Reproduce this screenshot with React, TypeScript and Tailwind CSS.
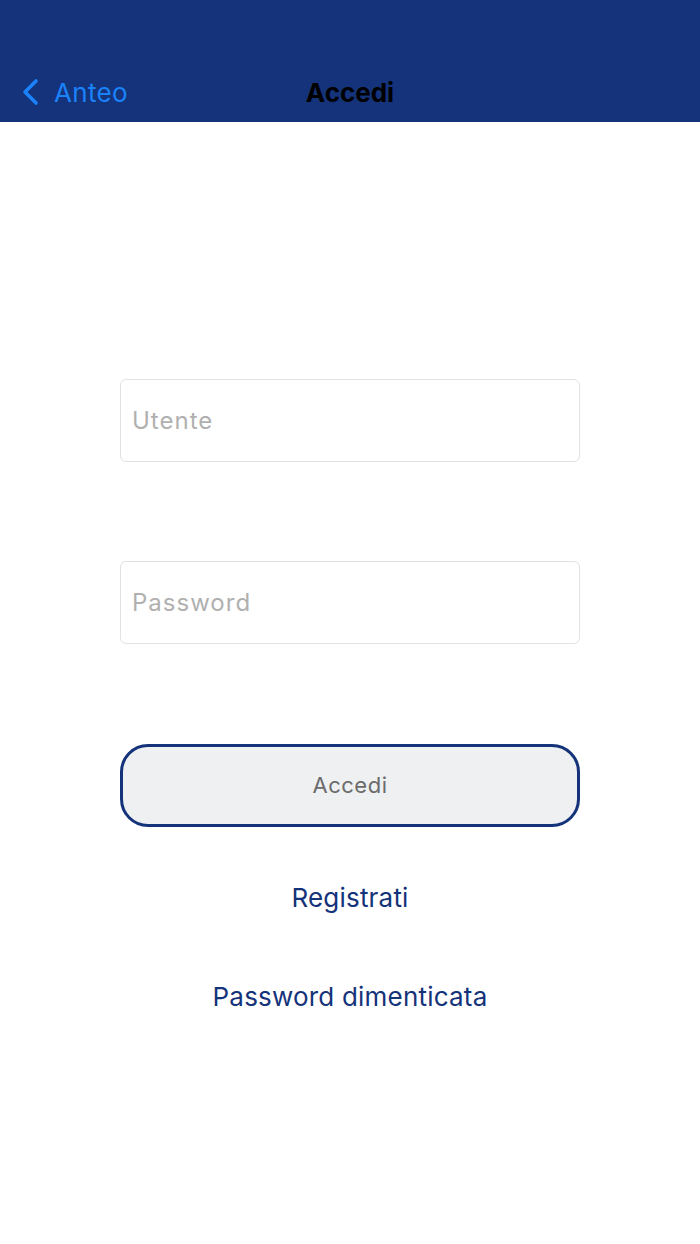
export default function App() {
  return (
    <div className="flex min-h-[1244px] w-[700px] flex-col bg-white font-['Inter',sans-serif]">
      <header className="flex h-[122px] flex-col justify-end bg-[#15337a] pb-[10px]">
        <div className="relative flex h-[40px] items-center px-[20px]">
          <div className="flex items-center gap-[12px] text-[#1a82fb]">
            <svg width="22" height="28" viewBox="0 0 22 28" fill="none">
              <path d="M16 3 L5 14 L16 25" stroke="currentColor" strokeWidth="3.6" strokeLinecap="round" strokeLinejoin="round" />
            </svg>
            <span className="text-[26px] tracking-[0.3px]">Anteo</span>
          </div>
          <span className="absolute left-1/2 -translate-x-1/2 text-[26px] font-bold text-black">Accedi</span>
        </div>
      </header>

      <main className="flex flex-col items-center pt-[257px]">
        <input
          placeholder="Utente"
          className="h-[83px] w-[460px] rounded-[6px] border border-[#e2e2e2] px-[11px] text-[24px] tracking-[1px] placeholder:text-[#b0b0b0] outline-none"
        />
        <input
          type="password"
          placeholder="Password"
          className="mt-[99px] h-[83px] w-[460px] rounded-[6px] border border-[#e2e2e2] px-[11px] text-[24px] tracking-[1px] placeholder:text-[#b0b0b0] outline-none"
        />
        <button className="mt-[100px] h-[83px] w-[460px] rounded-[28px] border-[3px] border-[#15337a] bg-[#eff0f2] text-[22px] tracking-[0.5px] text-[#6b6b6b]">
          Accedi
        </button>
        <a className="mt-[51px] text-[26px] tracking-[0.2px] text-[#15337a]">Registrati</a>
        <a className="mt-[60px] text-[26px] tracking-[0.2px] text-[#15337a]">Password dimenticata</a>
      </main>
    </div>
  );
}
